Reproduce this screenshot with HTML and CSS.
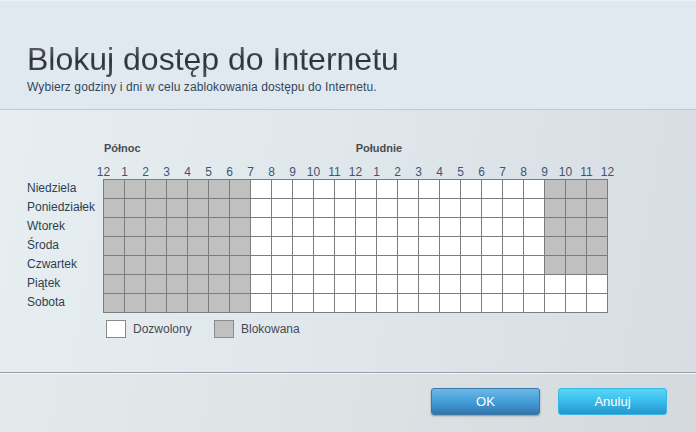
FILE: index.html
```html
<!DOCTYPE html>
<html lang="pl">
<head>
<meta charset="utf-8">
<title>Blokuj dostęp do Internetu</title>
<link rel="stylesheet" href="styles.css">
</head>
<body>
<div class="page">
  <header class="head">
    <h1 class="title">Blokuj dostęp do Internetu</h1>
    <p class="subtitle">Wybierz godziny i dni w celu zablokowania dostępu do Internetu.</p>
  </header>
  <main class="main">
    <div class="schedule">
      <div class="spacer"></div>
      <div class="periods">
        <span class="period">Północ</span>
        <span class="period noon">Południe</span>
      </div>
      <div class="spacer"></div>
      <div class="hours" id="hours"></div>
      <div class="days">
        <span>Niedziela</span>
        <span>Poniedziałek</span>
        <span>Wtorek</span>
        <span>Środa</span>
        <span>Czwartek</span>
        <span>Piątek</span>
        <span>Sobota</span>
      </div>
      <div class="grid" id="grid"></div>
      <div class="spacer"></div>
      <div class="legend">
        <span class="swatch allowed"></span><span class="legend-label">Dozwolony</span>
        <span class="swatch blocked"></span><span class="legend-label">Blokowana</span>
      </div>
    </div>
  </main>
  <footer class="foot">
    <button class="btn ok">OK</button>
    <button class="btn cancel">Anuluj</button>
  </footer>
</div>
<script>
  var hours = document.getElementById('hours');
  var labels = [12,1,2,3,4,5,6,7,8,9,10,11,12,1,2,3,4,5,6,7,8,9,10,11,12];
  labels.forEach(function (h) {
    var s = document.createElement('span');
    s.textContent = h;
    hours.appendChild(s);
  });
  var grid = document.getElementById('grid');
  for (var d = 0; d < 7; d++) {
    for (var c = 0; c < 24; c++) {
      var cell = document.createElement('span');
      var blocked = c < 7 || (c >= 21 && d <= 4);
      cell.className = 'cell' + (blocked ? ' on' : '');
      grid.appendChild(cell);
    }
  }
</script>
</body>
</html>
```
FILE: styles.css
```css
html, body {
  margin: 0;
  padding: 0;
}
body {
  width: 696px;
  height: 432px;
  overflow: hidden;
  font-family: "Liberation Sans", Arial, sans-serif;
  background: #e2e9ed;
}
.page {
  display: flex;
  flex-direction: column;
  height: 432px;
}
.head {
  height: 108px;
  background: #e0e9ef;
  border-top: 1px solid #eef2f5;
  border-bottom: 1px solid #c3c8cc;
  padding-left: 27px;
  box-sizing: content-box;
}
.title {
  margin: 40px 0 0 0;
  font-size: 32px;
  font-weight: normal;
  line-height: 36px;
  letter-spacing: 0;
  background: linear-gradient(#707478 0%, #2c3034 55%, #4d5256 100%);
  -webkit-background-clip: text;
  background-clip: text;
  color: transparent;
}
.subtitle {
  margin: 3px 0 0 0;
  font-size: 12px;
  line-height: 14px;
  letter-spacing: 0.1px;
  color: #33475a;
}
.main {
  height: 262px;
  background: linear-gradient(100deg, #e7eef1 0%, #e0e7ec 50%, #d7dde2 100%);
  border-bottom: 1px solid #97a1a8;
  padding-left: 27px;
}
.schedule {
  display: grid;
  grid-template-columns: 76px auto;
  justify-content: start;
  margin-top: 31px;
}
.periods {
  display: flex;
  height: 14px;
  font-size: 11px;
  font-weight: bold;
  color: #4a4c4f;
  line-height: 14px;
}
.period {
  margin-left: 1px;
}
.noon {
  margin-left: 215px;
}
.hours {
  display: flex;
  margin: 10px 0 0 -10px;
  height: 14px;
}
.hours span {
  width: 21px;
  text-align: center;
  font-size: 12px;
  line-height: 14px;
  color: #3d5670;
}
.days {
  display: flex;
  flex-direction: column;
}
.days span {
  height: 19px;
  line-height: 19px;
  font-size: 12px;
  color: #2f3f50;
}
.grid {
  display: grid;
  grid-template-columns: repeat(24, 20px);
  grid-auto-rows: 18px;
  gap: 1px;
  padding: 1px;
  background: #7d7d7d;
  width: max-content;
}
.cell {
  background: #ffffff;
}
.cell.on {
  background: #c0c0c0;
}
.legend {
  display: flex;
  align-items: center;
  margin-top: 7px;
  margin-left: 3px;
}
.swatch {
  width: 18px;
  height: 16px;
  border: 1px solid #8a8a8a;
  margin-right: 7px;
}
.swatch.allowed {
  background: #ffffff;
}
.swatch.blocked {
  background: #c0c0c0;
  margin-left: 23px;
}
.legend-label {
  font-size: 12px;
  color: #4a4850;
  line-height: 16px;
  width: 58px;
}
.foot {
  flex: 1;
  border-top: 1px solid #f2f5f6;
  background: linear-gradient(100deg, #e4e9eb 0%, #dde2e5 50%, #d3d9dc 100%);
  display: flex;
  justify-content: flex-end;
  align-items: flex-start;
  gap: 18px;
  padding: 14px 29px 0 0;
}
.btn {
  width: 109px;
  height: 27px;
  border-radius: 3px;
  font-family: "Liberation Sans", Arial, sans-serif;
  font-size: 13px;
  color: #ffffff;
  cursor: pointer;
  padding: 0;
}
.ok {
  border: 1px solid #3a78a8;
  background: linear-gradient(#6db8e8 0%, #47a0da 45%, #3b8bc6 75%, #3275aa 100%);
  box-shadow: 0 1px 2px rgba(0, 0, 0, 0.35);
}
.cancel {
  border: 1px solid #39b6e2;
  background: linear-gradient(#58d6f7 0%, #3ec2ee 40%, #2ea8dc 75%, #2895cd 100%);
}
```
